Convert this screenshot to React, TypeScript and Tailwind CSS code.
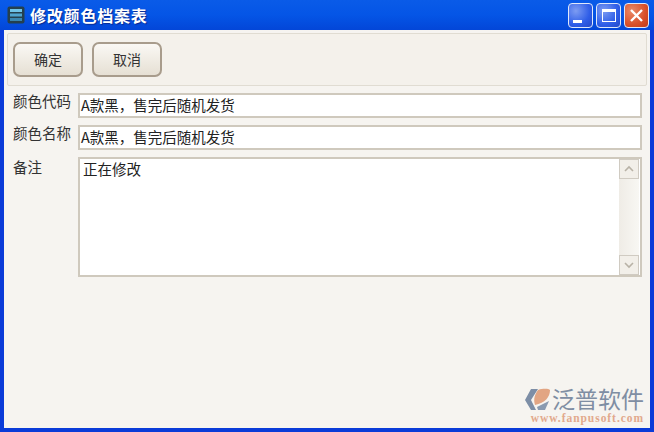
import type { ReactNode } from "react"

const font = "font-['Noto_Sans_CJK_SC','Liberation_Sans',sans-serif]"

function CaptionButton({ red, children }: { red?: boolean; children: ReactNode }) {
    return (
        <div className={"w-[25px] h-[25px] rounded-[4px] border border-[#dfe8fb] flex items-center justify-center " + (red ? "bg-[radial-gradient(circle_at_30%_30%,#ea8a68,#d9502a_60%,#c0391a)]" : "bg-[radial-gradient(circle_at_30%_30%,#7d9cf2,#2f5ee8_60%,#2348c8)]")}>
            {children}
        </div>
    )
}

function ActionButton({ label }: { label: string }) {
    return (
        <button className="w-[70px] h-[35px] rounded-[7px] border-2 border-[#a89c8c] bg-gradient-to-b from-[#faf8f4] to-[#e6e0d4] text-[14px] text-[#333]">
            {label}
        </button>
    )
}

function Field({ label, value }: { label: string; value: string }) {
    return (
        <div className="flex items-start h-[32px]">
            <div className="w-[74px] pl-[9px] text-[14.5px] leading-[20px] -mt-[2px] text-[#333]">{label}</div>
            <div className="flex-1 h-[25px] bg-white border-2 border-[#cfc9bd] pl-[1px] text-[14.5px] leading-[20px] text-[#222]">{value}</div>
        </div>
    )
}

export default function App() {
    return (
        <div className={"w-[654px] h-[432px] flex flex-col bg-[#0a3bd8] overflow-hidden " + font}>
            <div className="h-[30px] shrink-0 flex items-center bg-gradient-to-b from-[#0a5be8] via-[#0555e6] to-[#0346d8] pl-[7px] pr-[5px]">
                <svg width="18" height="18" viewBox="0 0 18 18" className="mr-[5px]">
                    <rect x="0.5" y="0.5" width="17" height="17" rx="2" fill="#24404f" />
                    <rect x="3" y="3" width="12" height="3" fill="#6fc3e8" />
                    <rect x="3" y="7.5" width="12" height="3" fill="#4fa4cf" />
                    <rect x="3" y="12" width="12" height="3" fill="#3a86b0" />
                </svg>
                <div className="flex-1 text-white font-bold text-[16px] tracking-[0.8px] [text-shadow:1px_1px_1px_#0a2a90]">修改颜色档案表</div>
                <div className="flex gap-[3px]">
                    <CaptionButton>
                        <div className="w-[9px] h-[3px] bg-white mt-[12px] mr-[6px]" />
                    </CaptionButton>
                    <CaptionButton>
                        <div className="w-[14px] h-[13px] border border-white border-t-[3px]" />
                    </CaptionButton>
                    <CaptionButton red>
                        <svg width="15" height="15" viewBox="0 0 15 15">
                            <path d="M2 2 L13 13 M13 2 L2 13" stroke="#fff" strokeWidth="2.4" />
                        </svg>
                    </CaptionButton>
                </div>
            </div>
            <div className="flex-1 mx-[4px] mb-[4px] bg-[#f6f4f0] flex flex-col">
                <div className="mx-[3px] mt-[3px] h-[53px] shrink-0 flex items-center gap-[9px] pl-[5px] border border-[#e0dcd2] rounded-[2px] bg-[#f4f1eb]">
                    <ActionButton label="确定" />
                    <ActionButton label="取消" />
                </div>
                <div className="pr-[8px] pt-[7px] flex flex-col">
                    <Field label="颜色代码" value="A款黑，售完后随机发货" />
                    <Field label="颜色名称" value="A款黑，售完后随机发货" />
                    <div className="flex items-start">
                        <div className="w-[74px] pl-[9px] text-[14.5px] leading-[20px] text-[#333]">备注</div>
                        <div className="flex-1 h-[120px] bg-white border-2 border-[#cfc9bd] flex justify-between text-[14.5px] leading-[20px] text-[#222] pl-[3px]">
                            <div>正在修改</div>
                            <div className="w-[20px] mr-[1px] flex flex-col justify-between bg-gradient-to-r from-[#efece6] to-[#f8f7f3]">
                                <div className="h-[20px] border border-[#d0cbc2] bg-[#f2efe9] flex items-center justify-center">
                                    <svg width="12" height="8" viewBox="0 0 12 8"><path d="M2 6 L6 2 L10 6" fill="none" stroke="#b8b2a6" strokeWidth="1.6" /></svg>
                                </div>
                                <div className="h-[20px] border border-[#d0cbc2] bg-[#f2efe9] flex items-center justify-center">
                                    <svg width="12" height="8" viewBox="0 0 12 8"><path d="M2 2 L6 6 L10 2" fill="none" stroke="#b8b2a6" strokeWidth="1.6" /></svg>
                                </div>
                            </div>
                        </div>
                    </div>
                </div>
                <div className="mt-auto self-end mr-[6px] mb-[3px] flex flex-col items-end">
                    <div className="flex items-center gap-[1px]">
                        <svg width="27" height="24" viewBox="0 0 27 24">
                            <path d="M7 1 L14 1 L7 12 L12 22 L7 22 L1 12 Z" fill="#7d8ea6" />
                            <path d="M14 2 C20 0 25 1 26 2 C26 9 21 15 11 17 C9 11 11 6 14 2 Z" fill="#e2a583" />
                            <path d="M13 19 L25 13 L21 22 L14 22 Z" fill="#8a9ab0" />
                        </svg>
                        <div className="font-['Liberation_Sans','Noto_Sans_CJK_SC',sans-serif] text-[23px] leading-[24px] text-[#7f8ea3]">泛普软件</div>
                    </div>
                    <div className="font-['Liberation_Serif',serif] font-bold text-[11.5px] leading-[13px] tracking-[0.95px] text-[#e2a98c]">www.fanpusoft.com</div>
                </div>
            </div>
        </div>
    )
}
